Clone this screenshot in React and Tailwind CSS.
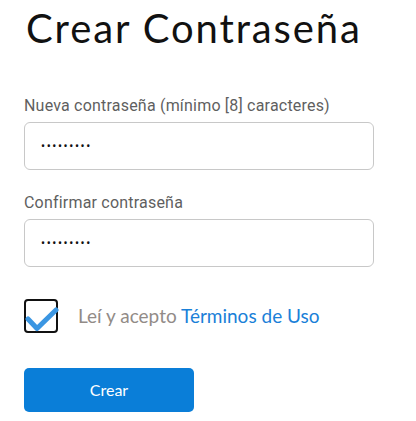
import React from "react";

export default function App() {
  return (
    <div className="w-[416px] h-[421px] bg-white pl-6 pt-1 font-['Lato',sans-serif]">
      <h1 className="pl-[2px] text-[40px] leading-[48px] font-normal tracking-[1.9px] text-[#111111] font-['Lato',sans-serif]">
        Crear Contraseña
      </h1>

      <label className="block mt-[44px] mb-[6px] text-[16px] leading-[20px] tracking-[0.2px] text-[#5f5f5f] font-['Roboto',sans-serif]">
        Nueva contraseña (mínimo [8] caracteres)
      </label>
      <div className="w-[350px] h-[48px] border border-[#c8c8c8] rounded-[6px] flex items-center pl-4">
        <input
          type="password"
          readOnly
          defaultValue="123456789"
          className="w-full outline-none bg-transparent text-[12px] tracking-[1.6px] text-[#111] font-['Roboto',sans-serif]"
        />
      </div>

      <label className="block mt-[23px] mb-[6px] text-[16px] leading-[20px] tracking-[0.2px] text-[#5f5f5f] font-['Roboto',sans-serif]">
        Confirmar contraseña
      </label>
      <div className="w-[350px] h-[48px] border border-[#c8c8c8] rounded-[6px] flex items-center pl-4">
        <input
          type="password"
          readOnly
          defaultValue="123456789"
          className="w-full outline-none bg-transparent text-[12px] tracking-[1.6px] text-[#111] font-['Roboto',sans-serif]"
        />
      </div>

      <div className="mt-[32px] flex items-center gap-5">
        <div className="relative w-[34px] h-[34px] border-2 border-[#111] rounded-[4px] shrink-0">
          <svg
            className="absolute -left-[1px] -top-[1px]"
            width="34"
            height="34"
            viewBox="0 0 34 34"
            fill="none"
          >
            <polyline
              points="3,19 12,28.5 31,10"
              stroke="#3b96e2"
              strokeWidth="5"
              strokeLinecap="round"
              strokeLinejoin="round"
            />
          </svg>
        </div>
        <span className="text-[19px] leading-[24px] text-[#928b87]">
          Leí y acepto <a className="text-[#1a80d8]">Términos de Uso</a>
        </span>
      </div>

      <button className="mt-[35px] w-[170px] h-[44px] rounded-[5px] bg-[#0a7ed8] text-white text-[16px] font-['Lato',sans-serif] flex items-center justify-center">
        Crear
      </button>
    </div>
  );
}
